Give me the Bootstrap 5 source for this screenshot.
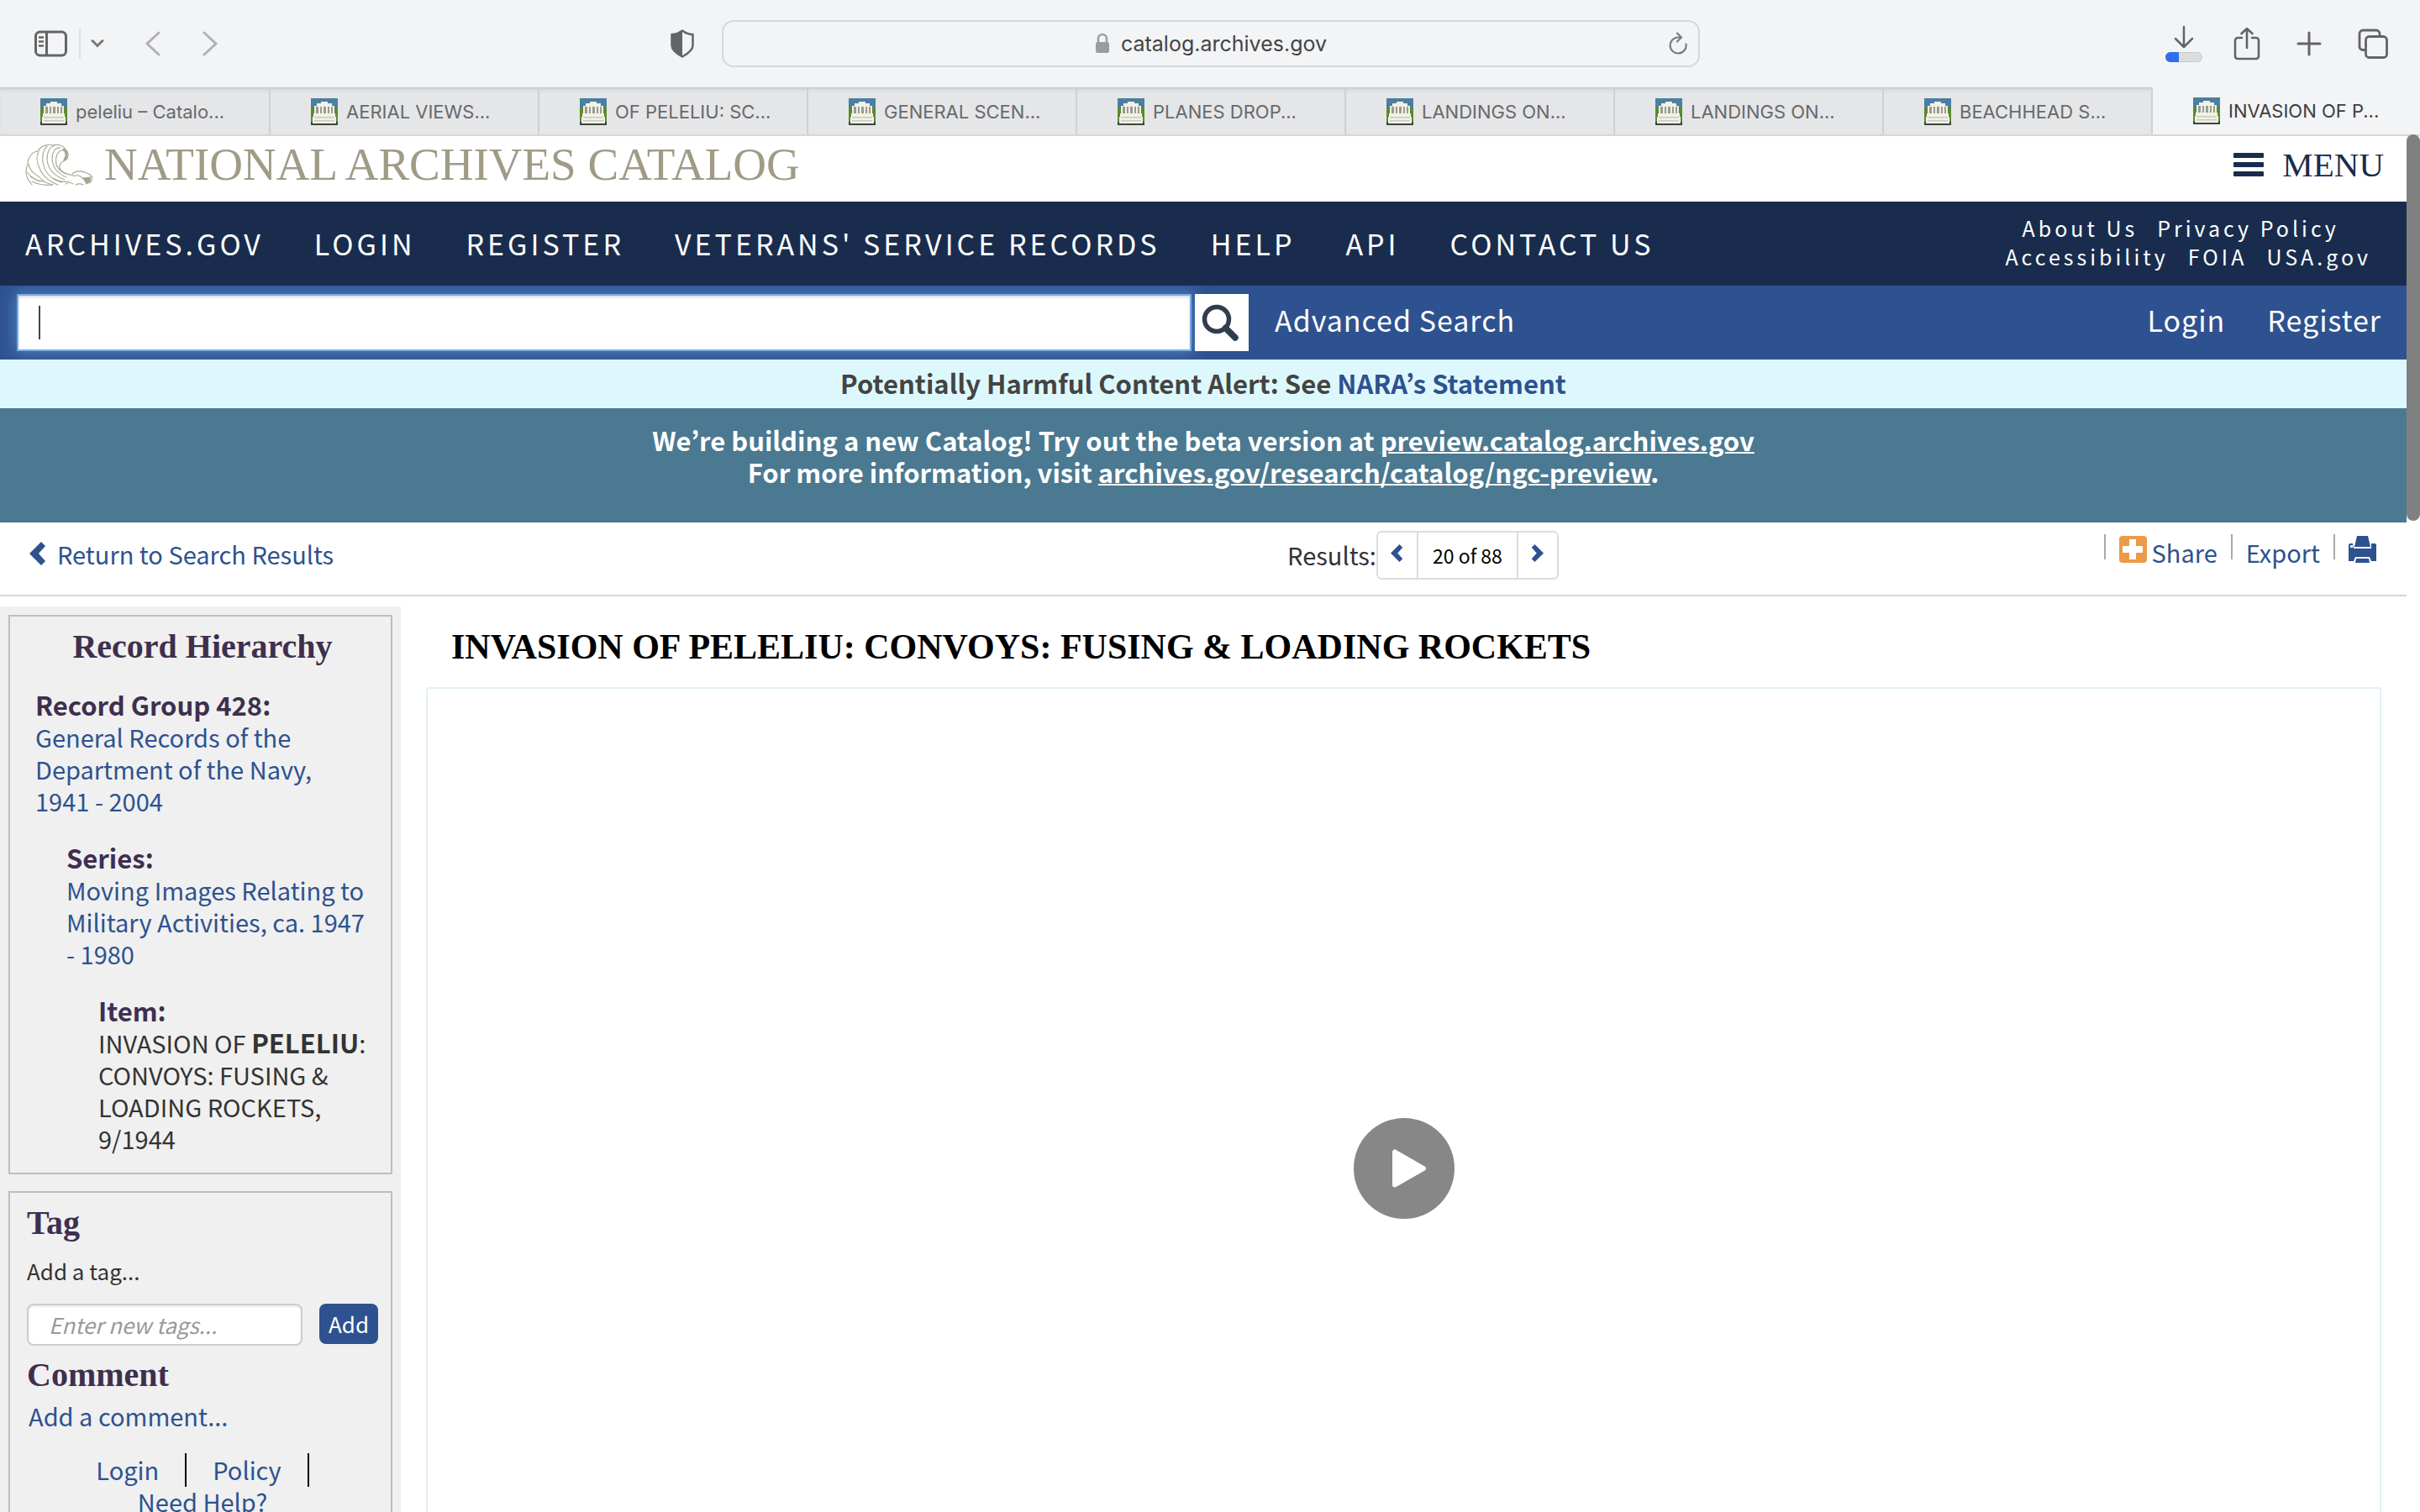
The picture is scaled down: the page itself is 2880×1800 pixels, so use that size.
<!DOCTYPE html>
<html lang="en">
<head>
<meta charset="utf-8">
<meta name="viewport" content="width=device-width, initial-scale=1">
<title>National Archives Catalog</title>
<link href="https://cdn.jsdelivr.net/npm/bootstrap@5.3.0/dist/css/bootstrap.min.css" rel="stylesheet">
<style>
  :root { --navy: #192c4d; --royal: #2e528f; --plum: #3e2f4f; --sys: Inter, "Liberation Sans", sans-serif; --slab: "Liberation Serif", serif; }
  body { font-family: "Noto Sans CJK KR", "Noto Sans", sans-serif; font-size: 29px; line-height: 38px; color: #333; background: #fff; }
  a { color: var(--royal); text-decoration: none; }
  button { font-family: inherit; }
  svg { display: block; flex: none; }
  .shell { height: 100vh; }

  /* browser frame */
  .toolbar { background: #f3f4f6; height: 104px; padding: 0 38px 0 40px; font-family: var(--sys); color: #636466; }
  .toolbar button { background: none; border: 0; padding: 0; color: inherit; }
  .tool-side { flex: 1 1 0; }
  .tool-rule { width: 2px; height: 36px; background: #dedfe1; margin: 0 12px 0 14px; }
  .toolbar .nav-arrow { color: #b0b1b3; margin-left: 48px; }
  .toolbar .shield { margin-right: 32px; }
  .tool-set { gap: 43px; }
  .tool-set button:first-child { margin-right: -7px; }
  .address { width: 1164px; height: 56px; border: 2px solid #d6d7d9; border-radius: 14px; font-size: 25px; color: #444; padding: 0 12px; }
  .host { gap: 13px; }
  .tab-strip { height: 58px; background: #e5e6e8; border-top: 1px solid #c3c4c6; border-bottom: 2px solid #d6d7d8; box-shadow: inset 0 4px 4px -2px #cfd0d2; font-family: var(--sys); font-size: 22px; }
  .tab-strip a { flex: 1 1 0; color: #68696b; padding-left: 48px; gap: 10px; border-left: 2px solid #cfd0d2; min-width: 0; }
  .tab-strip a:first-child { border-left: 0; padding-right: 2px; }
  .tab-strip a.current { background: #f3f4f6; color: #3c3d3f; margin-top: -1px; }

  /* page */
  .viewport-row { min-height: 0; }
  .scroll-track { width: 16px; background: #fff; }
  .scroll-thumb { height: 460px; border-radius: 8px; background: #808080; margin-top: -2px; }
  .brand-row { height: 78px; padding: 0 27px 10px 30px; }
  .brand-link { gap: 14px; }
  .brand-name { font: 55px/60px var(--slab); color: #9f9b86; }
  .menu-btn { font: 41px/46px var(--slab); color: var(--navy); background: none; border: 0; padding: 0; gap: 22px; }
  .main-nav { background: var(--navy); height: 100px; padding: 0 42px 0 30px; }
  .main-nav a { color: #fff; letter-spacing: 4px; }
  .primary-links { font-size: 34px; gap: 60px; }
  .minor-links { font-size: 25px; line-height: 34px; padding-bottom: 4px; }
  .minor-links div { gap: 23px; }
  .minor-links div:first-child { padding-right: 18px; }
  .search-row { background: var(--royal); height: 88px; padding: 0 30px 0 20px; font-size: 34px; overflow: hidden; }
  .search-row a { color: #fff; letter-spacing: 1px; padding-bottom: 6px; }
  .search-row .adv { margin-left: 31px; }
  .login-set { gap: 50px; }
  .search-box { width: 1398px; height: 68px; border: 2px solid #77abe6; background: #fff; box-shadow: inset 0 2px 3px rgba(0,0,0,.15), 0 0 18px 2px rgba(102,160,225,.6); padding: 0 24px; }
  .search-box input { border: 0; outline: 0; background: none; font-size: 29px; }
  .caret { width: 2px; height: 40px; background: #444; }
  .search-btn { width: 64px; height: 68px; background: #fff; border: 0; padding: 0 4px 0 0; margin-left: 4px; }
  .harm { background: #ddf8fd; color: #444; font-size: 31px; height: 58px; padding-bottom: 2px; }
  .beta { background: #4a7991; color: #fff; height: 136px; padding-top: 19px; font-size: 31px; }
  .beta a { color: #fff; text-decoration: underline; text-decoration-thickness: 2px; }
  .result-bar { height: 88px; border-bottom: 2px solid #d6d6d6; padding: 10px 36px 18px 35px; }
  .result-start { flex: 20 1 0; padding-bottom: 3px; }
  .result-end { flex: 13 1 0; }
  .back-link { gap: 13px; }
  .pager-label { padding-bottom: 3px; }
  .pager { height: 58px; border: 2px solid #ddd; border-radius: 6px; }
  .pager a { width: 46px; padding-bottom: 6px; }
  .pager span { width: 121px; border: solid #ddd; border-width: 0 2px; color: #000; font-size: 23px; }
  .actions { padding-top: 4px; }
  .actions > i { width: 2px; height: 30px; background: #aaa; }
  .actions a { padding: 2px 16px 0; gap: 6px; }
  .actions a:last-child { padding-right: 0; }

  .side { width: 477px; margin-top: 12px; background: #f0f0f0; padding: 10px; gap: 20px; }
  .panel { border: 2px solid #bdbdbd; padding: 13px 15px 0 20px; }
  .panel h2 { font: bold 40px/46px var(--slab); color: var(--plum); margin: 0; }
  .tree { padding: 27px 0 22px 10px; margin: 0; }
  .tree dt { color: var(--plum); font-weight: 700; }
  .tree dt, .tree b { font-size: 31px; }
  .tree dd { margin-bottom: 30px; }
  .tree dd:last-child { margin-bottom: 0; }
  .tree b { line-height: 1; }
  .lvl-2 { padding-left: 37px; }
  .lvl-3 { padding-left: 75px; }
  .panel label { font-size: 26px; line-height: 34px; margin: 17px 0 22px; }
  .tag-input { width: 328px; height: 50px; font-size: 26px; font-style: italic; border: 2px solid #ccc; border-radius: 8px; padding: 0 24px 2px; background: #fff; box-shadow: inset 0 2px 2px rgba(0,0,0,.08); }
  .tag-input::placeholder { color: #999; opacity: 1; }
  .add-btn { width: 70px; height: 48px; font-size: 26px; line-height: 34px; padding: 0; background: var(--royal); color: #fff; border-radius: 8px; }
  .add-row { gap: 20px; margin-bottom: 12px; }
  .comment-link { margin: 6px 0 26px 2px; }
  .foot-links { padding-bottom: 40px; }
  .foot-links .d-flex { gap: 31px; }
  .foot-links i { width: 2px; height: 40px; background: #000; margin-bottom: -2px; }
  .record { padding: 36px 30px 0 30px; }
  .record h1 { font: bold 42px/48px var(--slab); color: #000; margin: 0 0 24px 30px; }
  .player { height: 1146px; border: 2px solid #e3f1f7; }
  .player button { background: none; border: 0; padding: 0; }
</style>
<script src="https://cdn.jsdelivr.net/npm/bootstrap@5.3.0/dist/js/bootstrap.bundle.min.js"></script>
</head>
<body>
<svg width="0" height="0" class="position-absolute" aria-hidden="true">
  <symbol id="fav" viewBox="0 0 32 32">
    <rect width="32" height="32" fill="#5a8a2c"/><rect width="32" height="11" fill="#4b7f9f"/><rect y="28" width="32" height="4" fill="#3c4438"/>
    <path d="M4 9h3V6h5V4h8v2h5v3h3v9h1v4h1v8H2v-8h1v-4h1z" fill="#f1f1e6"/>
    <path d="M6 10h3v8H6zM11 10h2v8h-2zM15 10h3v8h-3zM20 10h2v8h-2zM24 10h2v8h-2z" fill="#999b93"/>
    <path d="M4 22h24v1.500H4zM4 26h24v1.500H4z" fill="#c9cac0"/>
  </symbol>
  <symbol id="chev" viewBox="0 0 20 28"><path d="M14 0l5 5-8 9 8 9-5 5L0 14z" fill="currentColor"/></symbol>
</svg>
<div class="shell d-flex flex-column overflow-hidden">
  <header class="toolbar d-flex align-items-center flex-shrink-0">
    <div class="tool-side d-flex align-items-center">
      <button aria-label="Sidebar"><svg width="40" height="32" viewBox="0 0 40 32" fill="none" stroke="currentColor" stroke-width="3"><rect x="2.500" y="2" width="36" height="28" rx="5"/><path d="M15.500 2v28"/><path d="M6 8.500h6M6 13.500h6M6 18.500h6" stroke-width="2.500"/></svg></button>
      <span class="tool-rule"></span>
      <button aria-label="Sidebar options"><svg width="16" height="12" viewBox="0 0 16 12" fill="none" stroke="#777" stroke-width="3" stroke-linecap="round"><path d="M2 2.500l6 6 6-6"/></svg></button>
      <button class="nav-arrow" aria-label="Back"><svg width="20" height="30" viewBox="0 0 20 30" fill="none" stroke="currentColor" stroke-width="3" stroke-linecap="round"><path d="M17 2L3 15l14 13"/></svg></button>
      <button class="nav-arrow" aria-label="Forward"><svg width="20" height="30" viewBox="0 0 20 30" fill="none" stroke="currentColor" stroke-width="3" stroke-linecap="round"><path d="M3 2l14 13L3 28"/></svg></button>
      <button class="shield ms-auto" aria-label="Privacy report"><svg width="30" height="34" viewBox="0 0 30 34"><path d="M15 1.500C11 4.500 6 6 2.500 6v13c0 6 6 10 12.500 13.500C21.500 29 27.500 25 27.500 19V6C24 6 19 4.500 15 1.500z" fill="none" stroke="currentColor" stroke-width="2.500" stroke-linejoin="round"/><path d="M15 1.500C11 4.500 6 6 2.500 6v13c0 6 6 10 12.500 13.500z" fill="currentColor"/></svg></button>
    </div>
    <div class="address d-flex align-items-center">
      <span class="tool-side"></span>
      <span class="host d-flex align-items-center"><svg width="18" height="26" viewBox="0 0 18 26"><path d="M4 12V7a5 5 0 0 1 10 0v5" fill="none" stroke="#9b9c9e" stroke-width="2.500"/><rect x="1" y="11" width="16" height="13" rx="2.500" fill="#9b9c9e"/></svg>catalog.archives.gov</span>
      <span class="tool-side d-flex justify-content-end"><button aria-label="Reload"><svg width="24" height="28" viewBox="0 0 24 28" fill="none" stroke="#7b7c7e" stroke-width="2.200" stroke-linecap="round" stroke-linejoin="round"><path d="M21.500 14.500A9.500 9.500 0 1 1 12 6.500h3.500M11 1.500l5 5-5 5"/></svg></button></span>
    </div>
    <div class="tool-set tool-side d-flex align-items-center justify-content-end">
      <button aria-label="Downloads"><svg width="46" height="44" viewBox="0 0 46 44"><path d="M23 2v22M13 16l10 10 10-10" fill="none" stroke="currentColor" stroke-width="2.500" stroke-linecap="round" stroke-linejoin="round"/><rect x="1.500" y="32.500" width="43" height="11" rx="5.500" fill="#dcdddf" stroke="#c8c9cb"/><path d="M17 32v12H7a6 6 0 0 1 0-12z" fill="#2f6fed"/></svg></button>
      <button aria-label="Share"><svg width="32" height="40" viewBox="0 0 32 40" fill="none" stroke="currentColor" stroke-width="2.600" stroke-linecap="round" stroke-linejoin="round"><path d="M10 13H5a3 3 0 0 0-3 3v19a3 3 0 0 0 3 3h22a3 3 0 0 0 3-3V16a3 3 0 0 0-3-3h-5M16 25V2M9.500 8L16 2l6.500 6"/></svg></button>
      <button aria-label="New tab"><svg width="30" height="30" viewBox="0 0 30 30" stroke="currentColor" stroke-width="3" stroke-linecap="round"><path d="M15 2v26M2 15h26"/></svg></button>
      <button aria-label="Tab overview"><svg width="36" height="36" viewBox="0 0 36 36" fill="none" stroke="currentColor" stroke-width="2.800"><path d="M9.500 25.500H6a4 4 0 0 1-4-4V6a4 4 0 0 1 4-4h16a4 4 0 0 1 4 4v3.500"/><rect x="9.500" y="9.500" width="25" height="25" rx="4"/></svg></button>
    </div>
  </header>
  <nav class="tab-strip d-flex flex-shrink-0">
    <a href="#" class="d-flex align-items-center"><svg width="32" height="32"><use href="#fav"/></svg>peleliu – Catalo...</a>
    <a href="#" class="d-flex align-items-center"><svg width="32" height="32"><use href="#fav"/></svg>AERIAL VIEWS...</a>
    <a href="#" class="d-flex align-items-center"><svg width="32" height="32"><use href="#fav"/></svg>OF PELELIU: SC...</a>
    <a href="#" class="d-flex align-items-center"><svg width="32" height="32"><use href="#fav"/></svg>GENERAL SCEN...</a>
    <a href="#" class="d-flex align-items-center"><svg width="32" height="32"><use href="#fav"/></svg>PLANES DROP...</a>
    <a href="#" class="d-flex align-items-center"><svg width="32" height="32"><use href="#fav"/></svg>LANDINGS ON...</a>
    <a href="#" class="d-flex align-items-center"><svg width="32" height="32"><use href="#fav"/></svg>LANDINGS ON...</a>
    <a href="#" class="d-flex align-items-center"><svg width="32" height="32"><use href="#fav"/></svg>BEACHHEAD S...</a>
    <a href="#" class="d-flex align-items-center current"><svg width="32" height="32"><use href="#fav"/></svg>INVASION OF P...</a>
  </nav>
  <div class="viewport-row d-flex flex-grow-1">
    <div class="flex-grow-1">
      <div class="brand-row d-flex align-items-center justify-content-between">
        <a href="#" class="brand-link d-flex align-items-center">
          <svg width="80" height="52" viewBox="0 0 80 52" fill="none" stroke="#a9a693" stroke-width="1.100" stroke-linecap="round">
            <path d="M8 50C1 42-1 34 3 26c0-9 5-15 12-16C19 3 28 1 33 3c7-2 13 1 15 5 4 3 4 9 1 12-5 2-9 5-8 10 2 6 10 8 17 9"/>
            <path d="M48 10c-5-3-10 1-11 7-2 9 2 16 12 20M42 6c-7-1-10 6-10 13 1 11 6 17 17 22M35 3c-6 2-9 9-9 17 1 12 8 19 21 24M26 4c-5 5-6 12-5 19 2 13 9 20 22 24M16 10c-3 6-2 14 1 20 4 11 12 16 22 20M4 25c1 7 6 12 12 15 5 6 11 9 17 10M2 35c5 6 10 9 15 11"/>
            <path d="M8 46c8 4 16 5 25 4M6 40c6 4 10 6 16 6M33 42c6 4 12 5 19 4"/>
            <path d="M56 37c4-4 12-4 17-1 4 1 7 4 7 7-1 3-2 4-4 5M58 40c5-3 8 0 11 3M60 50c4-2 7-1 9 0M48 49c3-2 6-2 9 0"/>
            <path d="M69 42l9-1-1 5-4 3z" fill="#a5a28e"/><path d="M46 8c4 3 4 8 1 12" stroke-width="3"/>
          </svg>
          <span class="brand-name">NATIONAL ARCHIVES CATALOG</span>
        </a>
        <button class="menu-btn d-flex align-items-center"><svg width="36" height="30" viewBox="0 0 36 30" fill="currentColor"><rect y="1" width="36" height="6" rx="1"/><rect y="12" width="36" height="6" rx="1"/><rect y="23" width="36" height="6" rx="1"/></svg>MENU</button>
      </div>
      <nav class="main-nav d-flex align-items-center justify-content-between">
        <div class="primary-links d-flex"><a href="#">ARCHIVES.GOV</a><a href="#">LOGIN</a><a href="#">REGISTER</a><a href="#">VETERANS' SERVICE RECORDS</a><a href="#">HELP</a><a href="#">API</a><a href="#">CONTACT US</a></div>
        <div class="minor-links">
          <div class="d-flex justify-content-center"><a href="#">About Us</a><a href="#">Privacy Policy</a></div>
          <div class="d-flex justify-content-center"><a href="#">Accessibility</a><a href="#">FOIA</a><a href="#">USA.gov</a></div>
        </div>
      </nav>
      <form class="search-row d-flex align-items-center">
        <div class="search-box d-flex align-items-center"><span class="caret"></span><input class="flex-grow-1" type="text" aria-label="Search the catalog"></div>
        <button type="button" class="search-btn d-flex align-items-center justify-content-center" aria-label="Search"><svg width="44" height="44" viewBox="0 0 44 44" fill="none" stroke="#2f3d4f"><circle cx="18" cy="18" r="14.500" stroke-width="5.500"/><path d="M28.500 28.500L40 40" stroke-width="7.500" stroke-linecap="round"/></svg></button>
        <a href="#" class="adv">Advanced Search</a>
        <div class="login-set d-flex ms-auto"><a href="#">Login</a><a href="#">Register</a></div>
      </form>
      <div class="harm fw-bold d-flex align-items-center justify-content-center"><span>Potentially Harmful Content Alert: See <a href="#">NARA’s Statement</a></span></div>
      <div class="beta fw-bold text-center">We’re building a new Catalog! Try out the beta version at <a href="#">preview.catalog.archives.gov</a><br>For more information, visit <a href="#">archives.gov/research/catalog/ngc-preview</a>.</div>
      <div class="result-bar d-flex align-items-center">
        <div class="result-start"><a href="#" class="back-link d-inline-flex align-items-center"><svg width="20" height="28"><use href="#chev"/></svg>Return to Search Results</a></div>
        <span class="pager-label">Results:</span>
        <div class="pager d-flex">
          <a href="#" class="d-flex align-items-center justify-content-center" aria-label="Previous"><svg width="15" height="21"><use href="#chev"/></svg></a>
          <span class="d-flex align-items-center justify-content-center">20 of 88</span>
          <a href="#" class="d-flex align-items-center justify-content-center" aria-label="Next"><svg width="15" height="21" viewBox="0 0 20 28"><path d="M6 0L1 5l8 9-8 9 5 5 14-14z" fill="currentColor"/></svg></a>
        </div>
        <div class="result-end actions align-self-start d-flex align-items-start justify-content-end">
          <i></i>
          <a href="#" class="d-flex align-items-start"><svg width="33" height="32" viewBox="0 0 33 32"><rect width="33" height="32" rx="4" fill="#eb9b47"/><path d="M12 4h8v8h8v8h-8v8h-8v-8H4v-8h8z" fill="#fff"/></svg>Share</a>
          <i></i>
          <a href="#">Export</a>
          <i></i>
          <a href="#" aria-label="Print"><svg width="33" height="32" viewBox="0 0 33 32" fill="currentColor"><path d="M10 0h13l3 13H7z"/><path d="M0 11a2 2 0 0 1 2-2h3l1 6h21V9h4a2 2 0 0 1 2 2v19h-6l-2-5H8l-2 5H0z"/><path d="M9 27h15l1 5H8z"/><rect x="2" y="11" width="3" height="3" fill="#fff"/></svg></a>
        </div>
      </div>
      <div class="d-flex">
        <aside class="side flex-shrink-0 d-flex flex-column">
          <section class="panel">
            <h2 class="text-center">Record Hierarchy</h2>
            <dl class="tree">
              <dt>Record Group 428:</dt><dd><a href="#">General Records of the<br>Department of the Navy,<br>1941 - 2004</a></dd>
              <dt class="lvl-2">Series:</dt><dd class="lvl-2"><a href="#">Moving Images Relating to<br>Military Activities, ca. 1947<br>- 1980</a></dd>
              <dt class="lvl-3">Item:</dt><dd class="lvl-3">INVASION OF <b>PELELIU</b>:<br>CONVOYS: FUSING &amp;<br>LOADING ROCKETS,<br>9/1944</dd>
            </dl>
          </section>
          <section class="panel">
            <h2>Tag</h2>
            <label for="tag" class="d-block">Add a tag...</label>
            <div class="add-row d-flex"><input id="tag" class="tag-input" type="text" placeholder="Enter new tags..."><button class="btn add-btn">Add</button></div>
            <h2>Comment</h2>
            <a href="#" class="comment-link d-block">Add a comment...</a>
            <div class="foot-links">
              <div class="d-flex justify-content-center"><a href="#">Login</a><i></i><a href="#">Policy</a><i></i></div>
              <div class="text-center"><a href="#">Need Help?</a></div>
            </div>
          </section>
        </aside>
        <main class="record flex-grow-1">
          <h1>INVASION OF PELELIU: CONVOYS: FUSING &amp; LOADING ROCKETS</h1>
          <div class="player d-flex align-items-center justify-content-center"><button aria-label="Play video"><svg width="120" height="120" viewBox="0 0 120 120"><circle cx="60" cy="60" r="60" fill="#878787"/><path d="M49 40.500v39L83 60z" fill="#fff" stroke="#fff" stroke-width="6" stroke-linejoin="round"/></svg></button></div>
        </main>
      </div>
    </div>
    <div class="scroll-track flex-shrink-0"><div class="scroll-thumb"></div></div>
  </div>
</div>
</body>
</html>
